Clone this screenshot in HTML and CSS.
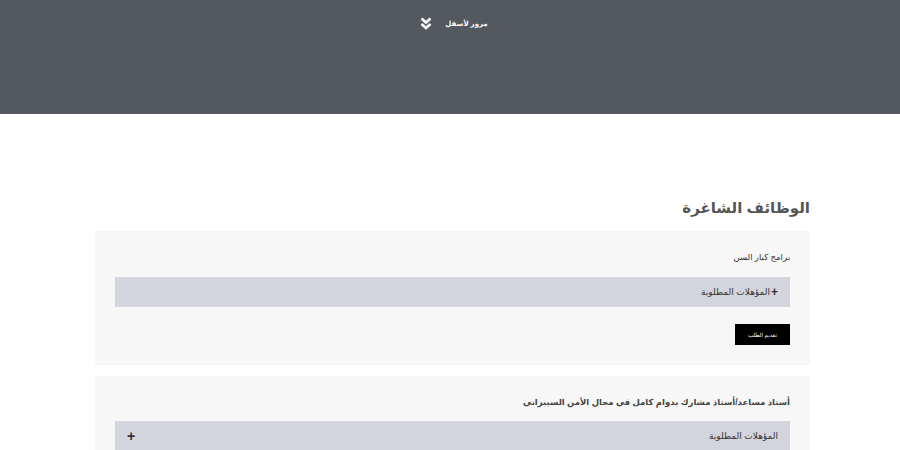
FILE: index.html
```
<!DOCTYPE html>
<html lang="ar" dir="rtl">
<head>
<meta charset="utf-8">
<link rel="stylesheet" href="styles.css">
</head>
<body>
<header class="hero">
  <div class="scroll">
    <span class="scroll-text">مرور لأسفل</span>
    <svg class="chev" width="12" height="13" viewBox="0 0 12 13"><path d="M1.5 1.5 L6 5.5 L10.5 1.5" fill="none" stroke="#fff" stroke-width="2.6"/><path d="M1.5 7 L6 11 L10.5 7" fill="none" stroke="#fff" stroke-width="2.6"/></svg>
  </div>
</header>
<main class="jobs">
  <h2 class="jobs-title">الوظائف الشاغرة</h2>
  <section class="card">
    <h3 class="card-title">برامج كبار السن</h3>
    <div class="bar bar-inline"><span class="plus">+</span><span>المؤهلات المطلوبة</span></div>
    <a class="apply">تقديم الطلب</a>
  </section>
  <section class="card">
    <h3 class="card-title strong">أستاذ مساعد/أستاذ مشارك بدوام كامل في مجال الأمن السيبراني</h3>
    <div class="bar bar-split"><span>المؤهلات المطلوبة</span><span class="plus big">+</span></div>
  </section>
</main>
</body>
</html>
```
FILE: styles.css
```
html, body {
  margin: 0;
  padding: 0;
  background: #fff;
  font-family: "Liberation Sans", "DejaVu Sans", sans-serif;
  color: #444;
}
.hero {
  height: 114px;
  background: #545960;
  display: flex;
  justify-content: center;
}
.scroll {
  display: flex;
  align-items: center;
  gap: 13px;
  height: 13px;
  margin-top: 17px;
  margin-left: 8px;
}
.scroll-text {
  color: #fff;
  font-size: 7px;
  font-weight: bold;
}
.chev { display: block; }
.jobs {
  width: 715px;
  margin: 0 90px 0 0;
  padding-top: 82px;
}
.jobs-title {
  margin: 0 0 11px;
  font-size: 15px;
  line-height: 24px;
  font-weight: bold;
  color: #555;
}
.card {
  background: #f7f7f7;
  padding: 18px 20px 20px;
  margin-bottom: 11px;
}
.card-title {
  margin: 0 0 12px;
  font-size: 8.5px;
  line-height: 16px;
  font-weight: normal;
  color: #333;
}
.card-title.strong {
  font-weight: bold;
  color: #444;
  margin-bottom: 11px;
}
.bar {
  height: 30px;
  background: #d3d5dc;
  display: flex;
  align-items: center;
  padding: 0 12px 0 12px;
  font-size: 9px;
  color: #333;
}
.bar-inline { gap: 1px; }
.bar-split { justify-content: space-between; }
.plus {
  font-size: 12px;
  font-weight: bold;
  color: #333;
}
.plus.big { font-size: 14px; }
.apply {
  display: inline-flex;
  align-items: center;
  justify-content: center;
  width: 55px;
  height: 21px;
  margin-top: 17px;
  background: #000;
  color: #fff;
  font-size: 5.5px;
}
```
